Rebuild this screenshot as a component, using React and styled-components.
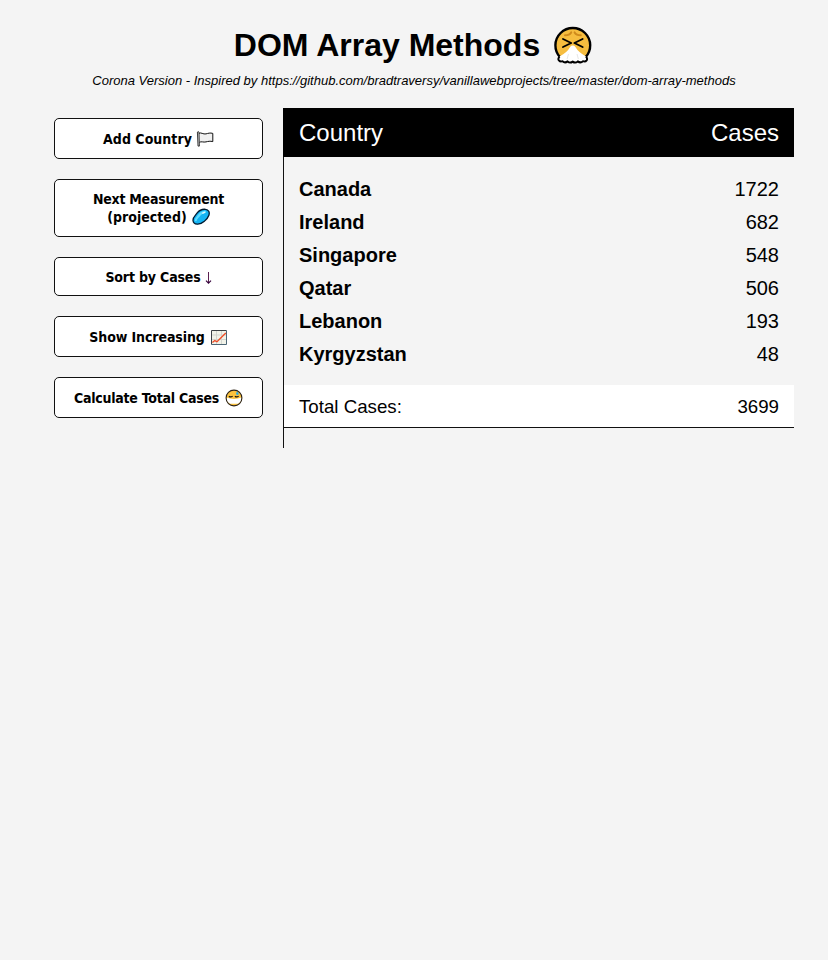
import React from "react";
import styled, { createGlobalStyle } from "styled-components";

const GlobalStyle = createGlobalStyle`
  * { box-sizing: border-box; }
  body {
    margin: 0;
    min-height: 100vh;
    background: #f4f4f4;
    color: #000;
    font-family: "Liberation Sans", Arial, Helvetica, sans-serif;
  }
`;

const Page = styled.div`
  display: flex;
  flex-direction: column;
  padding-top: 26px;
`;

const Title = styled.h1`
  display: flex;
  align-items: center;
  justify-content: center;
  gap: 14px;
  height: 38px;
  margin: 0;
  padding-right: 2px;
  font-size: 32px;
  line-height: 38px;
  white-space: nowrap;

  svg { width: 38px; height: 38px; }
`;

const Subtitle = styled.p`
  margin: 8px 0 0;
  height: 18px;
  text-align: center;
  font-size: 13px;
  line-height: 18px;
  font-style: italic;
  white-space: nowrap;
`;

const Main = styled.main`
  display: grid;
  grid-template-columns: 209px 511px;
  column-gap: 20px;
  margin: 18px 34px 0 54px;
`;

const Sidebar = styled.aside`
  display: flex;
  flex-direction: column;
  gap: 20px;
  padding-top: 10px;
`;

const Button = styled.button`
  display: flex;
  flex-direction: column;
  align-items: center;
  justify-content: center;
  height: ${(p) => p.$height}px;
  padding: 0;
  background: #fff;
  border: 1px solid #111;
  border-radius: 5px;
  color: #000;
  font-family: "DejaVu Sans Condensed", "DejaVu Sans", sans-serif;
  font-stretch: condensed;
  font-size: 14px;
  font-weight: bold;
  line-height: 18px;
`;

const Line = styled.span`
  display: flex;
  align-items: center;
  height: 18px;
  white-space: nowrap;
  letter-spacing: ${(p) => p.$spacing || 0}px;

  svg { flex: none; margin-left: ${(p) => p.$gap || 5}px; }
`;

const Panel = styled.section`
  display: flex;
  flex-direction: column;
  height: 340px;
  border-left: 1px solid #111;
`;

const PanelHeader = styled.header`
  display: flex;
  justify-content: space-between;
  height: 49px;
  margin-left: -1px;
  padding: 0 15px 0 16px;
  background: #000;
  color: #fff;
  font-size: 24px;
  line-height: 50px;
`;

const Rows = styled.div`
  padding: 16px 15px 14px;
`;

const Row = styled.div`
  display: flex;
  justify-content: space-between;
  height: 33px;
  font-size: 20px;
  line-height: 33px;
`;

const Total = styled.div`
  display: flex;
  justify-content: space-between;
  height: 43px;
  padding: 0 15px;
  background: #fff;
  border-bottom: 1px solid #111;
  font-size: 18.72px;
  line-height: 43px;
`;

const SneezingFace = () => (
  <svg viewBox="0 0 38 38">
    <path d="M6.2 32A17.4 17.4 0 1 1 31.4 32v2H6.2z" fill="#f6bd3f" />
    <path d="M6.2 31.4A17.4 17.4 0 1 1 31.4 31.4" fill="none" stroke="#000" strokeWidth="2.4" />
    <path d="M11 9.2q4.6 0 6.2-2.8M26.8 9.2q-4.6 0-6.2-2.8" fill="none" stroke="#cf8a1c" strokeWidth="2" strokeLinecap="round" />
    <path d="M9 13l8.2 4-8.2 4M28.6 13l-8.2 4 8.2 4" fill="none" stroke="#000" strokeWidth="1.9" strokeLinecap="round" strokeLinejoin="round" />
    <path
      d="M18.8 19.6q1.6 0 2.6 1.4 3 5.2 10.2 9.2 2.2 2.2 1 4.2-1.3 1.8-3.6 1-2.4 2-5.2.2-2.6 2-5.1.2-2.6 2-5.1-.2-2.7 1.8-5.1-.2-2.4.8-3.6-1-1-2.2 1-4.2 7.4-3.8 10.2-9.2 1-1.4 2.7-1.4z"
      fill="#fff"
    />
    <path
      d="M5.6 30.6q-2 2-.7 3.8 1.5 1.8 3.6.8 2.4 2.2 5.1.2 2.4 2.2 5.1.2 2.6 2 5.1-.2 2.7 2 5.2-.2 2.3 1 3.6-.8 1.2-1.8-.6-3.8"
      fill="none" stroke="#000" strokeWidth="2" strokeLinejoin="round"
    />
    <path d="M14.5 28l-1.4 5M23 28l1.4 5" stroke="#e6e6e6" />
  </svg>
);

const Flag = () => (
  <svg width="18" height="18" viewBox="0 0 18 18">
    <path d="M2.6 3.4c2.4-1.5 4.6 1.2 7.4.5 2-.6 4.2-1.3 6.8-.5v8.2c-2.6-.7-4.8-.2-6.8.3-2.6.7-4.8-.9-6.6.5" fill="#f0f0f0" stroke="#111" strokeWidth="1" />
    <path d="M1.4 2.1q.9-1 1.6 0l.4 14H2z" fill="#d8d8d8" stroke="#111" strokeWidth=".8" />
  </svg>
);

const Microbe = () => (
  <svg width="18" height="18" viewBox="0 0 18 18">
    <path d="M1 12.5C.7 9.4 3.2 7.6 5 5.2 7.2 2.4 10.2 1 13.4 1.3c3.2.3 4.5 2.8 3.5 5.9-.9 2.9-2.9 4.6-4.9 6.4-2 1.8-4.1 2.8-6.8 2.6-2.4-.2-4-1.4-4.2-3.7z" fill="#14b4f4" stroke="#001a30" strokeWidth="1.3" />
    <path d="M3.8 12.2c0-2 2-3 3.6-5.2C9 4.9 10.8 3.9 13 3.9" fill="none" stroke="#5fdcff" strokeWidth="2.2" strokeLinecap="round" />
    <path d="M10.8 5.2l1.8-.9" stroke="#e3fbff" strokeWidth="1.3" strokeLinecap="round" />
  </svg>
);

const DownArrow = () => (
  <svg width="7" height="14" viewBox="0 0 7 14">
    <path d="M3.5 2v11" stroke="#5a2050" strokeWidth="1" />
    <path d="M1 10.6l2.5 2.5L6 10.6" fill="none" stroke="#35003b" strokeWidth="1.2" />
  </svg>
);

const Chart = () => (
  <svg width="18" height="18" viewBox="0 0 18 18">
    <path d="M1.5 2.5h15v14h-15z" fill="#f1f2e8" />
    <path d="M6.5 3v13M11.5 3v13M2 7h14M2 11.5h14" stroke="#d3d5cf" />
    <path d="M1.5 16.5v-14h15" fill="none" stroke="#3c4144" />
    <path d="M16.5 2.5v14h-15" fill="none" stroke="#4c6676" />
    <path d="M2.4 14.6l2.4-2 2.2 1.2L15.8 5" fill="none" stroke="#f04a24" strokeWidth="1.3" />
  </svg>
);

const MaskedFace = () => (
  <svg width="18" height="18" viewBox="0 0 18 18">
    <circle cx="9" cy="9" r="7.7" fill="#fbc23c" />
    <path d="M1.6 8.6q3.6 1.3 7.4 1.3t7.4-1.3v3q-1.2 2.2-3.4 3.2H5Q2.8 13.6 1.6 11.4z" fill="#fff" />
    <circle cx="9" cy="9" r="7.9" fill="none" stroke="#2b2114" strokeWidth="1.1" />
    <path d="M3.9 7.2q1.8 1.4 3.7 0M9.9 7.2q1.8 1.4 3.7 0" fill="none" stroke="#111" strokeWidth="1.2" />
    <path d="M12 2.4q2.4 1.8 1.5 3.2-1.4.9-2.4-.3-.3-1.2.9-2.9z" fill="#20a9e8" />
  </svg>
);

const countries = [
  ["Canada", 1722],
  ["Ireland", 682],
  ["Singapore", 548],
  ["Qatar", 506],
  ["Lebanon", 193],
  ["Kyrgyzstan", 48],
];

export default function App() {
  return (
    <>
      <GlobalStyle />
      <Page>
        <Title>DOM Array Methods <SneezingFace /></Title>
        <Subtitle>Corona Version - Inspired by https://github.com/bradtraversy/vanillawebprojects/tree/master/dom-array-methods</Subtitle>
        <Main>
          <Sidebar>
            <Button $height={41}><Line $spacing={0.04} $gap={4}>Add Country<Flag /></Line></Button>
            <Button $height={58}>
              <Line $spacing={-0.26}>Next Measurement</Line>
              <Line $gap={5}>(projected)<Microbe /></Line>
            </Button>
            <Button $height={39}><Line $spacing={-0.16} $gap={4}>Sort by Cases<DownArrow /></Line></Button>
            <Button $height={41}><Line $spacing={-0.1} $gap={5}>Show Increasing<Chart /></Line></Button>
            <Button $height={41}><Line $spacing={-0.24} $gap={6}>Calculate Total Cases<MaskedFace /></Line></Button>
          </Sidebar>
          <Panel>
            <PanelHeader><span>Country</span><span>Cases</span></PanelHeader>
            <Rows>
              {countries.map(([name, cases]) => (
                <Row key={name}><strong>{name}</strong><span>{cases}</span></Row>
              ))}
            </Rows>
            <Total><span>Total Cases:</span><span>{countries.reduce((sum, [, n]) => sum + n, 0)}</span></Total>
          </Panel>
        </Main>
      </Page>
    </>
  );
}
